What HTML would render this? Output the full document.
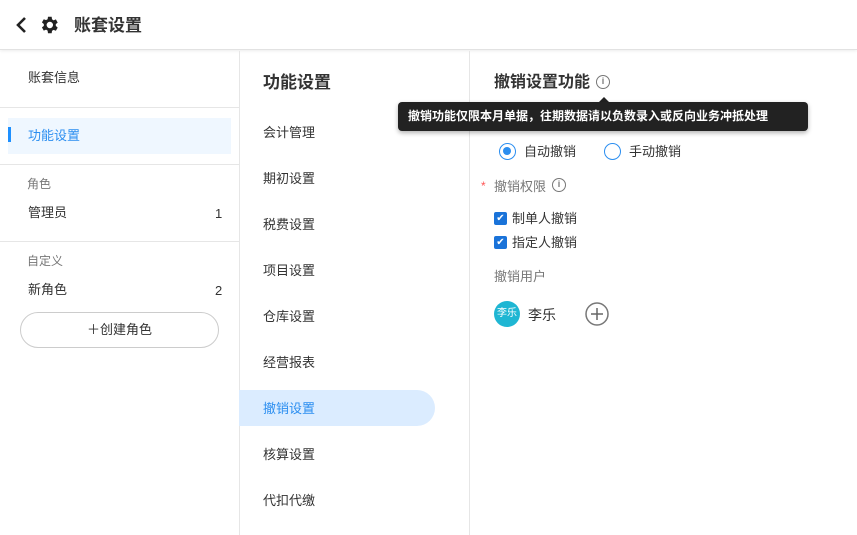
<!DOCTYPE html>
<html><head><meta charset="utf-8"><style>
*{margin:0;padding:0;box-sizing:border-box}
body{width:857px;height:535px;background:#fff;font-family:"Liberation Sans","Noto Sans CJK SC",sans-serif;color:#333;position:relative;overflow:hidden;font-size:13px;line-height:1.15}
.a{position:absolute;white-space:nowrap}
</style></head><body>
<div class="a" style="left:0;top:0;width:857px;height:50px;border-bottom:1px solid #e2e2e2;box-shadow:0 1px 3px rgba(0,0,0,.08)"></div>
<svg class="a" style="left:15px;top:16px" width="14" height="18" viewBox="0 0 14 18"><path d="M10 2 L3 9 L10 16" stroke="#222" stroke-width="2.6" fill="none"/></svg>
<svg class="a" style="left:38px;top:14px" width="22" height="22" viewBox="0 0 24 24"><path fill="#222" d="M19.4 13a7.5 7.5 0 0 0 0-2l2.1-1.6-2-3.5-2.5 1a7.6 7.6 0 0 0-1.7-1L14.9 3h-4l-.4 2.7a7.6 7.6 0 0 0-1.7 1l-2.5-1-2 3.5L6.4 11a7.5 7.5 0 0 0 0 2l-2.1 1.6 2 3.5 2.5-1a7.6 7.6 0 0 0 1.7 1l.4 2.9h4l.4-2.7a7.6 7.6 0 0 0 1.7-1l2.5 1 2-3.5zM12.9 15.5a3.5 3.5 0 1 1 0-7 3.5 3.5 0 0 1 0 7z"/></svg>
<div class="a" style="left:74px;top:16px;font-size:17px;font-weight:bold;color:#333">账套设置</div>
<div class="a" style="left:239px;top:51px;width:1px;height:484px;background:#e6e6e6"></div>
<div class="a" style="left:469px;top:51px;width:1px;height:484px;background:#e6e6e6"></div>
<div class="a" style="left:28px;top:71px">账套信息</div>
<div class="a" style="left:0;top:107px;width:239px;height:1px;background:#e6e6e6"></div>
<div class="a" style="left:8px;top:118px;width:223px;height:36px;background:#eff7ff"></div>
<div class="a" style="left:8px;top:127px;width:3px;height:15px;background:#1e90ff"></div>
<div class="a" style="left:28px;top:129px;color:#2b8ef0">功能设置</div>
<div class="a" style="left:0;top:164px;width:239px;height:1px;background:#e6e6e6"></div>
<div class="a" style="left:27px;top:178px;font-size:12px;color:#777">角色</div>
<div class="a" style="left:28px;top:206px">管理员</div><div class="a" style="left:215px;top:207px">1</div>
<div class="a" style="left:0;top:241px;width:239px;height:1px;background:#e6e6e6"></div>
<div class="a" style="left:27px;top:255px;font-size:12px;color:#777">自定义</div>
<div class="a" style="left:28px;top:283px">新角色</div><div class="a" style="left:215px;top:284px">2</div>
<div class="a" style="left:20px;top:312px;width:199px;height:36px;border:1px solid #ccc;border-radius:18px;text-align:center;line-height:34px">＋创建角色</div>
<div class="a" style="left:263px;top:73px;font-size:17px;font-weight:bold">功能设置</div>
<div class="a" style="left:239px;top:390px;width:196px;height:36px;background:#dbecff;border-radius:0 18px 18px 0"></div>
<div class="a" style="left:263px;top:126px">会计管理</div>
<div class="a" style="left:263px;top:172px">期初设置</div>
<div class="a" style="left:263px;top:218px">税费设置</div>
<div class="a" style="left:263px;top:264px">项目设置</div>
<div class="a" style="left:263px;top:310px">仓库设置</div>
<div class="a" style="left:263px;top:356px">经营报表</div>
<div class="a" style="left:263px;top:402px;color:#2b8ef0">撤销设置</div>
<div class="a" style="left:263px;top:448px">核算设置</div>
<div class="a" style="left:263px;top:494px">代扣代缴</div>
<div class="a" style="left:494px;top:74px;font-size:16px;font-weight:bold">撤销设置功能</div>
<div class="a" style="left:596px;top:75px;width:14px;height:14px;border:1.5px solid #777;border-radius:50%;font-size:9px;text-align:center;line-height:11px;color:#777;font-weight:bold">i</div>
<div class="a" style="left:598px;top:97px;width:0;height:0;border:6px solid transparent;border-bottom-color:#222;border-top:0"></div>
<div class="a" style="left:398px;top:102px;width:410px;height:29px;background:#222;border-radius:4px;color:#fff;font-size:12px;font-weight:bold;line-height:29px;padding-left:10px;box-shadow:0 2px 5px rgba(0,0,0,.3)">撤销功能仅限本月单据，往期数据请以负数录入或反向业务冲抵处理</div>
<div class="a" style="left:499px;top:143px;width:17px;height:17px;border:1.5px solid #2b8ef0;border-radius:50%"><div style="margin:3px;width:8px;height:8px;border-radius:50%;background:#2b8ef0"></div></div>
<div class="a" style="left:524px;top:145px">自动撤销</div>
<div class="a" style="left:604px;top:143px;width:17px;height:17px;border:1.5px solid #2b8ef0;border-radius:50%"></div>
<div class="a" style="left:629px;top:145px">手动撤销</div>
<div class="a" style="left:481px;top:180px;color:#f55;font-size:12px">*</div>
<div class="a" style="left:494px;top:180px;color:#777">撤销权限</div>
<div class="a" style="left:552px;top:178px;width:14px;height:14px;border:1.5px solid #777;border-radius:50%;font-size:9px;text-align:center;line-height:11px;color:#777;font-weight:bold">i</div>
<div class="a" style="left:494px;top:212px;width:13px;height:13px;background:#1a73d9;border-radius:2px;color:#fff;font-size:10px;text-align:center;line-height:13px">✔</div>
<div class="a" style="left:512px;top:212px">制单人撤销</div>
<div class="a" style="left:494px;top:236px;width:13px;height:13px;background:#1a73d9;border-radius:2px;color:#fff;font-size:10px;text-align:center;line-height:13px">✔</div>
<div class="a" style="left:512px;top:236px">指定人撤销</div>
<div class="a" style="left:494px;top:270px;color:#777">撤销用户</div>
<div class="a" style="left:494px;top:301px;width:26px;height:26px;border-radius:50%;background:#1fb6d3;color:#fff;font-size:10px;text-align:center;line-height:26px">李乐</div>
<div class="a" style="left:528px;top:307px;font-size:14px">李乐</div>
<svg class="a" style="left:585px;top:302px" width="24" height="24" viewBox="0 0 24 24"><circle cx="12" cy="12" r="11" stroke="#777" stroke-width="1.5" fill="none"/><path d="M12 6v12M6 12h12" stroke="#666" stroke-width="1.5"/></svg>
</body></html>
